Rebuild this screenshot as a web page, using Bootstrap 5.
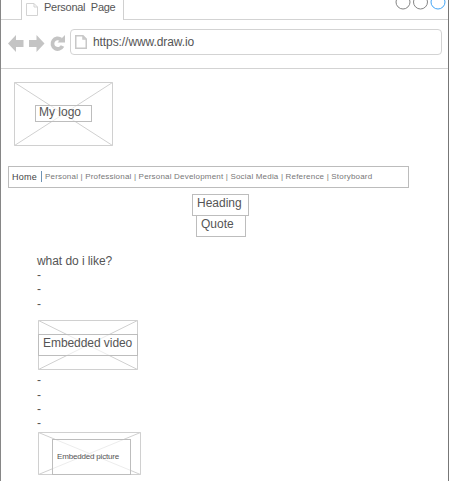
<!DOCTYPE html>
<html lang="en">
<head>
<meta charset="utf-8">
<meta name="viewport" content="width=device-width, initial-scale=1">
<title>Personal Page</title>
<link href="https://cdn.jsdelivr.net/npm/bootstrap@5.3.0/dist/css/bootstrap.min.css" rel="stylesheet">
<style>
body{font:12px/14px "Liberation Sans",Arial,sans-serif;color:#555;background:#fff}
svg{display:block;flex:none}
.browser{width:449px;height:481px;border-left:1px solid #868686;border-right:1px solid #777}
.tabstrip{height:20px}
.strip-edge{border-bottom:1px solid #d3d3d3}
.strip-start{width:20px}
.tab-page{width:103px;border-left:1px solid #d0d0d0;border-right:1px solid #d0d0d0;padding-left:4px}
.tab-title{margin-left:6px;white-space:pre;font-size:11px;letter-spacing:-.27px}
.toolbar{height:49px;border-bottom:1px solid #d3d3d3;padding:9px 6px 0 7px}
.address{height:26px;border:1px solid #d3d3d3;border-radius:4px;padding-left:4px;margin-left:4px}
.url{margin-left:6px;letter-spacing:-.08px}
.frame{display:grid}
.frame>*{grid-area:1/1}
.frame>svg{width:100%;height:100%}
.cap{border:1px solid #bdbdbd;background:rgba(255,255,255,.6);white-space:nowrap;position:relative}
.logo{width:99px;height:64px;margin:13px 0 0 13px}
.logo .cap{width:57px;height:17px;margin:23px 0 0 21px;padding-left:3px;line-height:13px}
.menu{width:401px;height:22px;margin:20px 0 0 7px;border:1px solid #bcbcbc;padding-left:3px;font-size:8px;white-space:pre;color:#777}
.menu .home{font-size:9px;color:#444;letter-spacing:.25px;margin-top:-1px}
.menu .links{letter-spacing:.19px;margin-top:-1px}
.bar{width:1px;height:11px;background:#6f93b4;margin:-2px 3px 0 4px}
.heading{width:57px;height:22px;margin:6px 0 0 191px;padding:1px 0 0 4px}
.quote{width:50px;height:22px;margin:-1px 0 0 195px;padding:1px 0 0 4px}
.question{margin:17px 0 0 36px;letter-spacing:-.06px}
.dashes{margin-left:36px;line-height:14.4px}
.video{width:100px;height:50px;margin:9px 0 0 37px}
.video .cap{width:100px;height:22px;margin-top:14px;padding:1px 0 0 4px;letter-spacing:-.06px}
.dashes.second{margin-top:3px}
.picture{width:103px;height:43px;margin:1px 0 0 37px}
.picture .cap{width:79px;height:36px;margin:7px 0 0 14px;padding:10px 0 0 4px;font-size:8px;letter-spacing:-.18px}
</style>
</head>
<body class="overflow-hidden">
<div class="browser d-flex flex-column overflow-hidden">
  <header class="tabstrip d-flex flex-shrink-0">
    <div class="strip-edge strip-start"></div>
    <div class="tab-page d-flex">
      <svg width="12" height="17" viewBox="0 0 12 17" fill="none" stroke="#d3d3d3"><path d="M.5 3.500H8L11.500 7V15.500H.5ZM8 3.500V7H11.500"/></svg>
      <span class="tab-title">Personal  Page</span>
    </div>
    <div class="strip-edge flex-grow-1 d-flex justify-content-end">
      <svg width="54" height="10" viewBox="0 0 54 10" fill="none" stroke="#858585"><circle cx="9" cy="2" r="7"/><circle cx="26.500" cy="2" r="7"/><circle cx="44" cy="2" r="7" stroke="#42a5f5"/></svg>
    </div>
  </header>
  <nav class="toolbar d-flex flex-shrink-0">
    <svg width="58" height="26" viewBox="0 0 58 26" fill="#c4c4c4"><path d="M0 14.500 8 6V11H15.500V18H8V23ZM36.500 14.500 28.500 6V11H21V18H28.500V23Z"/><path d="M54.500 17A5.300 5.300 0 1 1 53 10.500" fill="none" stroke="#c4c4c4" stroke-width="3.800"/><path d="M57 6V13.500H49.500Z"/></svg>
    <div class="address d-flex align-items-center flex-grow-1">
      <svg width="12" height="14" viewBox="0 0 12 14" fill="none" stroke="#c8c8c8" stroke-width="1.500"><path d="M.75.75H8L11.250 4V13.250H.75ZM8 .75V4H11.250"/></svg>
      <span class="url">https://www.draw.io</span>
    </div>
  </nav>
  <main>
    <div class="frame logo">
      <svg viewBox="0 0 99 64" fill="none" stroke="#d0d0d0"><path d="M.5.5H98.500V63.500H.5ZL98.500 63.500M98.500.5L.5 63.500"/></svg>
      <div class="cap">My logo</div>
    </div>
    <div class="menu d-flex align-items-center"><span class="home">Home</span><span class="bar"></span><span class="links">Personal | Professional | Personal Development | Social Media | Reference | Storyboard</span></div>
    <div class="cap heading">Heading</div>
    <div class="cap quote">Quote</div>
    <div class="question">what do i like?</div>
    <div class="dashes">-<br>-<br>-</div>
    <div class="frame video">
      <svg viewBox="0 0 100 50" fill="none" stroke="#d0d0d0"><path d="M.5.5H99.500V49.500H.5ZL99.500 49.500M99.500.5L.5 49.500"/></svg>
      <div class="cap">Embedded video</div>
    </div>
    <div class="dashes second">-<br>-<br>-<br>-</div>
    <div class="frame picture">
      <svg viewBox="0 0 103 43" fill="none" stroke="#d0d0d0"><path d="M.5.5H102.500V42.500H.5ZL102.500 42.500M102.500.5L.5 42.500"/></svg>
      <div class="cap">Embedded picture</div>
    </div>
  </main>
</div>
<script src="https://cdn.jsdelivr.net/npm/bootstrap@5.3.0/dist/js/bootstrap.bundle.min.js"></script>
</body>
</html>
